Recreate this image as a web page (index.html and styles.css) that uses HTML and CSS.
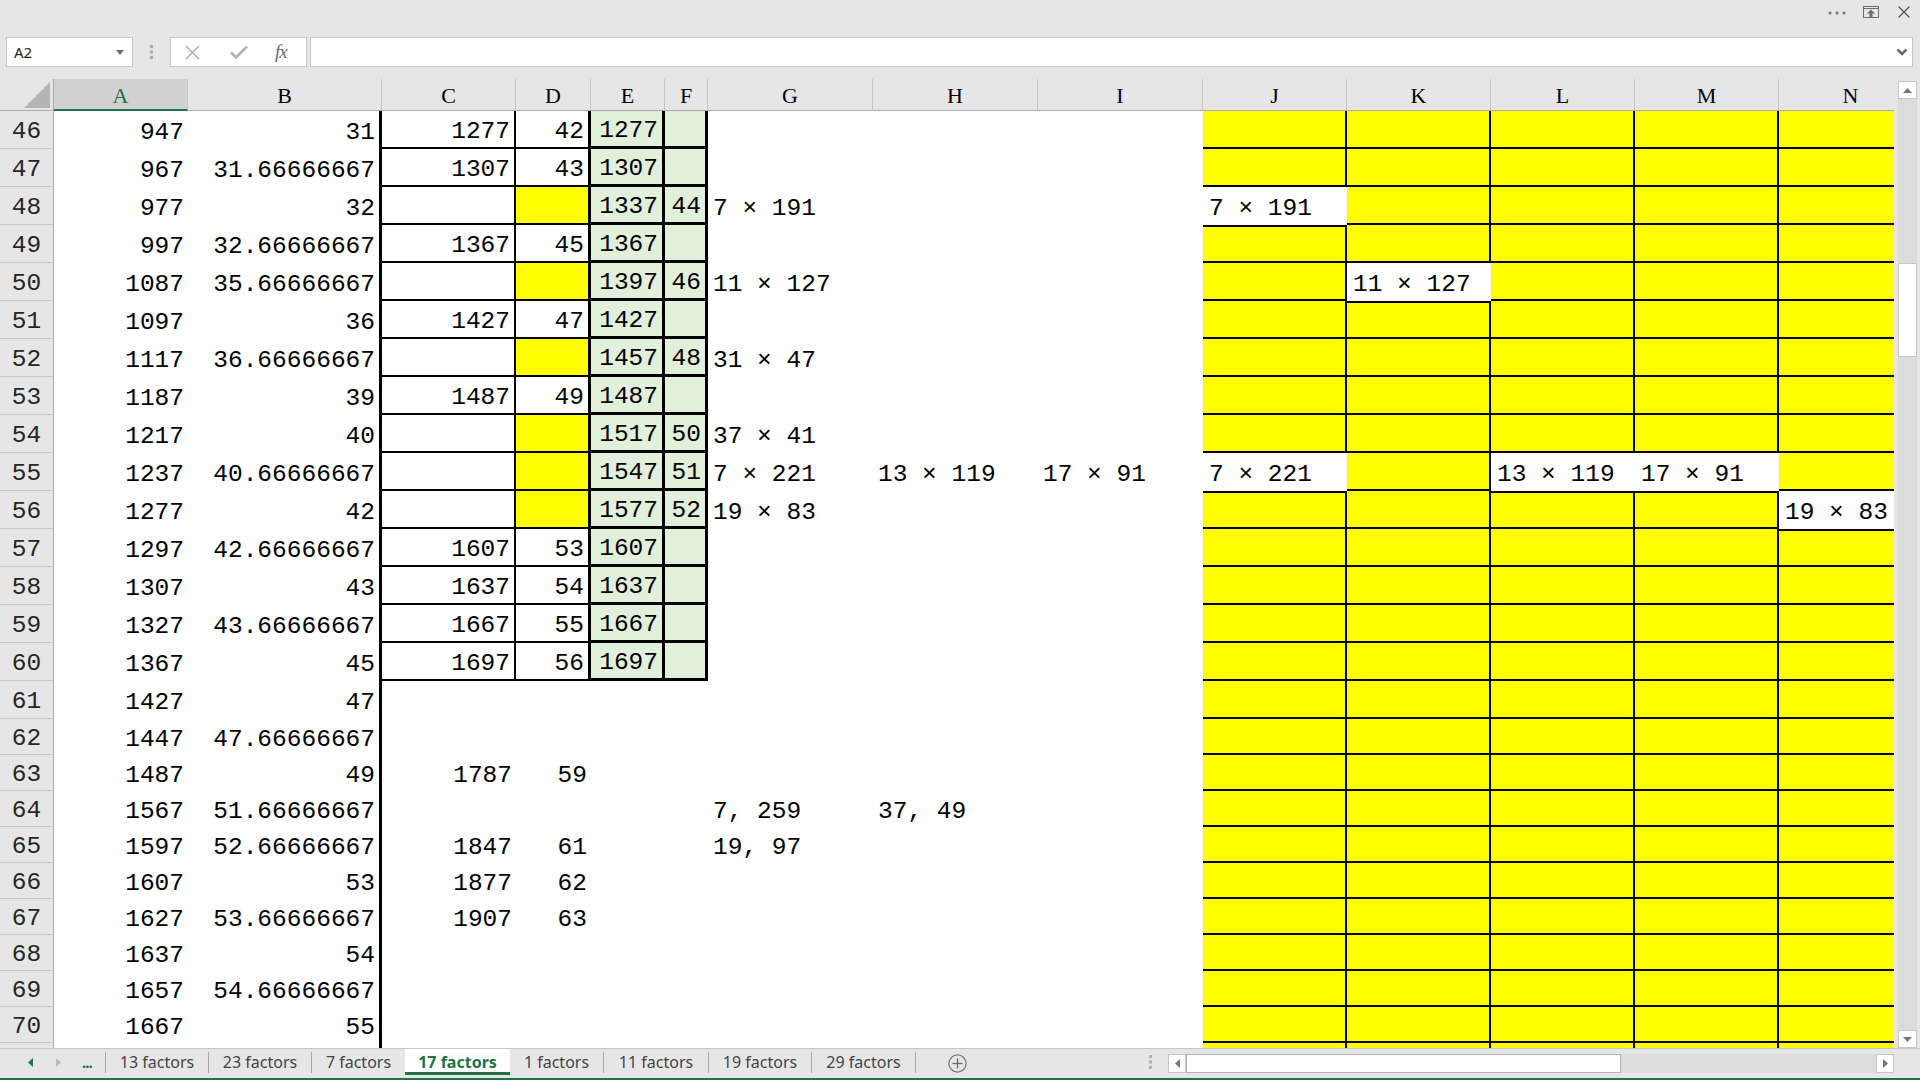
FILE: index.html
```html
<!DOCTYPE html>
<html>
<head>
<meta charset="utf-8">
<title>17 factors</title>
<link rel="stylesheet" href="styles.css">
</head>
<body>
<div class="app">
  <div class="top">
    <svg class="more" width="18" height="4" viewBox="0 0 18 4"><circle cx="2" cy="2" r="1.6" fill="#7a7a7a"/><circle cx="9" cy="2" r="1.6" fill="#7a7a7a"/><circle cx="16" cy="2" r="1.6" fill="#7a7a7a"/></svg>
    <svg class="restore" width="16" height="12" viewBox="0 0 16 12"><rect x="0.5" y="0.5" width="15" height="11" fill="none" stroke="#6d6d6d"/><line x1="1" y1="2.5" x2="15" y2="2.5" stroke="#6d6d6d"/><polygon points="8,3.5 4,7.5 6.5,7.5 6.5,11 9.5,11 9.5,7.5 12,7.5" fill="#6d6d6d"/></svg>
    <svg class="close" width="12" height="12" viewBox="0 0 12 12"><line x1="0.5" y1="0.5" x2="11.5" y2="11.5" stroke="#555" stroke-width="1.2"/><line x1="11.5" y1="0.5" x2="0.5" y2="11.5" stroke="#555" stroke-width="1.2"/></svg>
  </div>
  <div class="fbar">
    <div class="namebox"><span>A2</span><svg width="8" height="5" viewBox="0 0 8 5"><polygon points="0,0 8,0 4,5" fill="#6b6b6b"/></svg></div>
    <div class="grip"><svg width="4" height="14" viewBox="0 0 4 14"><rect x="0" y="0" width="3" height="3" fill="#a8a8a8"/><rect x="0" y="5.5" width="3" height="3" fill="#a8a8a8"/><rect x="0" y="11" width="3" height="3" fill="#a8a8a8"/></svg></div>
    <div class="fbtns">
      <svg width="15" height="15" viewBox="0 0 15 15"><line x1="1" y1="1" x2="14" y2="14" stroke="#b3b3b3" stroke-width="1.6"/><line x1="14" y1="1" x2="1" y2="14" stroke="#b3b3b3" stroke-width="1.6"/></svg>
      <svg class="chk" width="18" height="14" viewBox="0 0 18 14"><polyline points="1,7.5 6,12.5 17,1.5" fill="none" stroke="#b3b3b3" stroke-width="2.6"/></svg>
      <span class="fx">fx</span>
    </div>
    <div class="finput"><svg width="12" height="8" viewBox="0 0 12 8"><polyline points="1.5,1.5 6,6 10.5,1.5" fill="none" stroke="#6b6b6b" stroke-width="2.6"/></svg></div>
  </div>
  <div class="sheet">
    <div class="grid">
      <div class="hdr">
        <span class="corner"><svg width="26" height="26" viewBox="0 0 26 26"><polygon points="26,0 26,26 0,26" fill="#b4b4b4"/></svg></span>
        <span class="sel">A</span><span>B</span><span>C</span><span>D</span><span>E</span><span>F</span><span>G</span><span>H</span><span>I</span><span>J</span><span>K</span><span>L</span><span>M</span><span>N</span>
      </div>
      <div class="row"><span class="h">46</span><span>947</span><span class="B">31</span><span class="C">1277</span><span class="D">42</span><span class="E">1277</span><span class="E"></span><span></span><span></span><span></span><span class="y"></span><span class="y"></span><span class="y"></span><span class="y"></span><span class="y"></span></div>
      <div class="row"><span class="h">47</span><span>967</span><span class="B">31.66666667</span><span class="C">1307</span><span class="D">43</span><span class="E">1307</span><span class="E"></span><span></span><span></span><span></span><span class="y"></span><span class="y"></span><span class="y"></span><span class="y"></span><span class="y"></span></div>
      <div class="row"><span class="h">48</span><span>977</span><span class="B">32</span><span class="C"></span><span class="D Y"></span><span class="E">1337</span><span class="E">44</span><span class="L">7 × 191</span><span></span><span></span><span class="w">7 × 191</span><span class="y"></span><span class="y"></span><span class="y"></span><span class="y"></span></div>
      <div class="row"><span class="h">49</span><span>997</span><span class="B">32.66666667</span><span class="C">1367</span><span class="D">45</span><span class="E">1367</span><span class="E"></span><span></span><span></span><span></span><span class="y t"></span><span class="y"></span><span class="y"></span><span class="y"></span><span class="y"></span></div>
      <div class="row"><span class="h">50</span><span>1087</span><span class="B">35.66666667</span><span class="C"></span><span class="D Y"></span><span class="E">1397</span><span class="E">46</span><span class="L">11 × 127</span><span></span><span></span><span class="y"></span><span class="w">11 × 127</span><span class="y"></span><span class="y"></span><span class="y"></span></div>
      <div class="row"><span class="h">51</span><span>1097</span><span class="B">36</span><span class="C">1427</span><span class="D">47</span><span class="E">1427</span><span class="E"></span><span></span><span></span><span></span><span class="y"></span><span class="y t"></span><span class="y"></span><span class="y"></span><span class="y"></span></div>
      <div class="row"><span class="h">52</span><span>1117</span><span class="B">36.66666667</span><span class="C"></span><span class="D Y"></span><span class="E">1457</span><span class="E">48</span><span class="L">31 × 47</span><span></span><span></span><span class="y"></span><span class="y"></span><span class="y"></span><span class="y"></span><span class="y"></span></div>
      <div class="row"><span class="h">53</span><span>1187</span><span class="B">39</span><span class="C">1487</span><span class="D">49</span><span class="E">1487</span><span class="E"></span><span></span><span></span><span></span><span class="y"></span><span class="y"></span><span class="y"></span><span class="y"></span><span class="y"></span></div>
      <div class="row"><span class="h">54</span><span>1217</span><span class="B">40</span><span class="C"></span><span class="D Y"></span><span class="E">1517</span><span class="E">50</span><span class="L">37 × 41</span><span></span><span></span><span class="y"></span><span class="y"></span><span class="y"></span><span class="y"></span><span class="y"></span></div>
      <div class="row"><span class="h">55</span><span>1237</span><span class="B">40.66666667</span><span class="C"></span><span class="D Y"></span><span class="E">1547</span><span class="E">51</span><span class="L">7 × 221</span><span class="L">13 × 119</span><span class="L">17 × 91</span><span class="w">7 × 221</span><span class="y"></span><span class="w">13 × 119</span><span class="w">17 × 91</span><span class="y"></span></div>
      <div class="row"><span class="h">56</span><span>1277</span><span class="B">42</span><span class="C"></span><span class="D Y"></span><span class="E">1577</span><span class="E">52</span><span class="L">19 × 83</span><span></span><span></span><span class="y t"></span><span class="y"></span><span class="y t"></span><span class="y t"></span><span class="w">19 × 83</span></div>
      <div class="row"><span class="h">57</span><span>1297</span><span class="B">42.66666667</span><span class="C">1607</span><span class="D">53</span><span class="E">1607</span><span class="E"></span><span></span><span></span><span></span><span class="y"></span><span class="y"></span><span class="y"></span><span class="y"></span><span class="y t"></span></div>
      <div class="row"><span class="h">58</span><span>1307</span><span class="B">43</span><span class="C">1637</span><span class="D">54</span><span class="E">1637</span><span class="E"></span><span></span><span></span><span></span><span class="y"></span><span class="y"></span><span class="y"></span><span class="y"></span><span class="y"></span></div>
      <div class="row"><span class="h">59</span><span>1327</span><span class="B">43.66666667</span><span class="C">1667</span><span class="D">55</span><span class="E">1667</span><span class="E"></span><span></span><span></span><span></span><span class="y"></span><span class="y"></span><span class="y"></span><span class="y"></span><span class="y"></span></div>
      <div class="row"><span class="h">60</span><span>1367</span><span class="B">45</span><span class="C">1697</span><span class="D">56</span><span class="E">1697</span><span class="E"></span><span></span><span></span><span></span><span class="y"></span><span class="y"></span><span class="y"></span><span class="y"></span><span class="y"></span></div>
      <div class="row"><span class="h">61</span><span>1427</span><span class="B">47</span><span></span><span></span><span></span><span></span><span></span><span></span><span></span><span class="y"></span><span class="y"></span><span class="y"></span><span class="y"></span><span class="y"></span></div>
      <div class="row s"><span class="h">62</span><span>1447</span><span class="B">47.66666667</span><span></span><span></span><span></span><span></span><span></span><span></span><span></span><span class="y"></span><span class="y"></span><span class="y"></span><span class="y"></span><span class="y"></span></div>
      <div class="row s"><span class="h">63</span><span>1487</span><span class="B">49</span><span>1787</span><span>59</span><span></span><span></span><span></span><span></span><span></span><span class="y"></span><span class="y"></span><span class="y"></span><span class="y"></span><span class="y"></span></div>
      <div class="row s"><span class="h">64</span><span>1567</span><span class="B">51.66666667</span><span></span><span></span><span></span><span></span><span class="L">7, 259</span><span class="L">37, 49</span><span></span><span class="y"></span><span class="y"></span><span class="y"></span><span class="y"></span><span class="y"></span></div>
      <div class="row s"><span class="h">65</span><span>1597</span><span class="B">52.66666667</span><span>1847</span><span>61</span><span></span><span></span><span class="L">19, 97</span><span></span><span></span><span class="y"></span><span class="y"></span><span class="y"></span><span class="y"></span><span class="y"></span></div>
      <div class="row s"><span class="h">66</span><span>1607</span><span class="B">53</span><span>1877</span><span>62</span><span></span><span></span><span></span><span></span><span></span><span class="y"></span><span class="y"></span><span class="y"></span><span class="y"></span><span class="y"></span></div>
      <div class="row s"><span class="h">67</span><span>1627</span><span class="B">53.66666667</span><span>1907</span><span>63</span><span></span><span></span><span></span><span></span><span></span><span class="y"></span><span class="y"></span><span class="y"></span><span class="y"></span><span class="y"></span></div>
      <div class="row s"><span class="h">68</span><span>1637</span><span class="B">54</span><span></span><span></span><span></span><span></span><span></span><span></span><span></span><span class="y"></span><span class="y"></span><span class="y"></span><span class="y"></span><span class="y"></span></div>
      <div class="row s"><span class="h">69</span><span>1657</span><span class="B">54.66666667</span><span></span><span></span><span></span><span></span><span></span><span></span><span></span><span class="y"></span><span class="y"></span><span class="y"></span><span class="y"></span><span class="y"></span></div>
      <div class="row s"><span class="h">70</span><span>1667</span><span class="B">55</span><span></span><span></span><span></span><span></span><span></span><span></span><span></span><span class="y"></span><span class="y"></span><span class="y"></span><span class="y"></span><span class="y"></span></div>
      <div class="row s"><span class="h"></span><span></span><span class="B"></span><span></span><span></span><span></span><span></span><span></span><span></span><span></span><span class="y"></span><span class="y"></span><span class="y"></span><span class="y"></span><span class="y"></span></div>
    </div>
    <div class="vscroll">
      <div class="sbtn"><svg width="9" height="5" viewBox="0 0 9 5"><polygon points="4.5,0 9,5 0,5" fill="#777"/></svg></div>
      <div class="vtrack"><div class="vthumb"></div></div>
      <div class="sbtn"><svg width="9" height="5" viewBox="0 0 9 5"><polygon points="0,0 9,0 4.5,5" fill="#777"/></svg></div>
    </div>
  </div>
  <div class="tabbar">
    <div class="tabarea">
      <div class="nav">
        <svg class="prev" width="5" height="9" viewBox="0 0 5 9"><polygon points="5,0 5,9 0,4.5" fill="#217346"/></svg>
        <svg class="next" width="5" height="9" viewBox="0 0 5 9"><polygon points="0,0 5,4.5 0,9" fill="#b9b9b9"/></svg>
        <span class="ell">...</span>
      </div>
      <i class="sep"></i>
      <span class="tab w102">13 factors</span><i class="sep"></i>
      <span class="tab w102">23 factors</span><i class="sep"></i>
      <span class="tab w93">7 factors</span>
      <span class="tab active">17 factors</span>
      <span class="tab w93">1 factors</span><i class="sep"></i>
      <span class="tab w104">11 factors</span><i class="sep"></i>
      <span class="tab w102">19 factors</span><i class="sep"></i>
      <span class="tab w103">29 factors</span><i class="sep"></i>
      <svg class="plus" width="19" height="19" viewBox="0 0 19 19"><circle cx="9.5" cy="9.5" r="8.6" fill="none" stroke="#7b7b7b" stroke-width="1.3"/><line x1="9.5" y1="4.5" x2="9.5" y2="14.5" stroke="#6b6b6b" stroke-width="1.3"/><line x1="4.5" y1="9.5" x2="14.5" y2="9.5" stroke="#6b6b6b" stroke-width="1.3"/></svg>
    </div>
    <div class="split"><svg width="3" height="14" viewBox="0 0 3 14"><rect x="0" y="0" width="3" height="3" fill="#b0b0b0"/><rect x="0" y="5.5" width="3" height="3" fill="#b0b0b0"/><rect x="0" y="11" width="3" height="3" fill="#b0b0b0"/></svg></div>
    <div class="hscroll">
      <div class="hbtn"><svg width="5" height="9" viewBox="0 0 5 9"><polygon points="5,0 5,9 0,4.5" fill="#777"/></svg></div>
      <div class="hthumb"></div>
      <div class="htrack"></div>
      <div class="hbtn"><svg width="5" height="9" viewBox="0 0 5 9"><polygon points="0,0 5,4.5 0,9" fill="#777"/></svg></div>
    </div>
  </div>
</div>
</body>
</html>
```

FILE: styles.css
```css
* { box-sizing: border-box; }
html, body { margin: 0; padding: 0; }
body {
  width: 1920px;
  height: 1080px;
  overflow: hidden;
  background: #e6e6e6;
  font-family: "Liberation Mono", "DejaVu Sans Mono", monospace;
}
.app {
  width: 1920px;
  height: 1080px;
  display: flex;
  flex-direction: column;
  background: #e6e6e6;
}

/* window controls */
.top {
  height: 37px;
  display: flex;
  justify-content: flex-end;
  align-items: flex-start;
  padding: 6px 10px 0 0;
}
.top .more { margin-top: 5px; margin-right: 17px; }
.top .restore { margin-right: 19px; }

/* formula bar */
.fbar {
  height: 30px;
  display: flex;
  margin-bottom: 12px;
  padding: 0 7px 0 6px;
}
.namebox {
  width: 127px;
  background: #fff;
  border: 1px solid #c6c6c6;
  display: flex;
  align-items: center;
  justify-content: space-between;
  padding: 0 8px 0 7px;
  font-family: "Noto Sans", "Open Sans", sans-serif;
  font-size: 15px;
  color: #222;
}
.grip {
  width: 37px;
  display: flex;
  align-items: center;
  justify-content: center;
}
.fbtns {
  width: 137px;
  background: #fff;
  border: 1px solid #c6c6c6;
  display: flex;
  align-items: center;
  padding-left: 14px;
}
.fbtns .chk { margin-left: 30px; }
.fx {
  margin-left: 27px;
  font-family: "Liberation Serif", serif;
  font-style: italic;
  font-size: 19px;
  color: #6b6b6b;
  letter-spacing: -1px;
}
.finput {
  flex: 1;
  margin-left: 3px;
  background: #fff;
  border: 1px solid #c6c6c6;
  display: flex;
  align-items: center;
  justify-content: flex-end;
  padding-right: 4px;
}

/* sheet */
.sheet {
  height: 969px;
  display: flex;
}
.grid {
  width: 1894px;
  height: 969px;
  overflow: hidden;
}
.hdr, .row {
  display: grid;
  grid-template-columns: 54px 134px 194px 134px 75px 74px 43px 165px 165px 165px 144px 144px 144px 144px 144px;
}
.hdr {
  height: 32px;
  background: #e6e6e6;
}
.hdr > span {
  display: flex;
  align-items: center;
  justify-content: center;
  border-right: 1px solid #c6c6c6;
  border-bottom: 1px solid #ababab;
  font-family: "Liberation Serif", serif;
  font-size: 22px;
  color: #000;
  padding-top: 3px;
}
.hdr > .corner {
  align-items: flex-end;
  justify-content: flex-end;
  padding: 0 3px 2px 0;
  border-right: 1px solid #ababab;
}
.hdr > .sel {
  background: #d2d2d2;
  color: #217346;
  border-bottom: 2px solid #217346;
}
.row {
  height: 38px;
  background: #fff;
}
.row.s { height: 36px; }
.row > span {
  display: flex;
  align-items: center;
  justify-content: flex-end;
  padding: 4px 4px 0 4px;
  white-space: nowrap;
  font-size: 24.5px;
  color: #000;
}
.row > .h {
  background: #e6e6e6;
  justify-content: center;
  padding: 4px 0 0 0;
  border-right: 1px solid #ababab;
  border-bottom: 1px solid #c6c6c6;
  color: #262626;
}
.row > .B { border-right: 3px solid #000; }
.row > .C {
  border-right: 2px solid #000;
  border-bottom: 2px solid #000;
}
.row > .D {
  border-right: 3px solid #000;
  border-bottom: 2px solid #000;
}
.row > .Y { background: #ffff00; }
.row > .E {
  background: #e2efda;
  border-right: 3px solid #000;
  border-bottom: 3px solid #000;
}
.row > .L {
  justify-content: flex-start;
  padding-left: 5px;
}
.row > .y {
  background: #ffff00;
  border-right: 2px solid #000;
  border-bottom: 2px solid #000;
}
.row > .y.t { border-top: 2px solid #000; }
.row > .w {
  background: #fff;
  justify-content: flex-start;
  padding-left: 6px;
}

/* vertical scrollbar */
.vscroll {
  width: 26px;
  height: 969px;
  display: flex;
  flex-direction: column;
  align-items: center;
  padding-top: 2px;
}
.sbtn {
  width: 19px;
  height: 18px;
  flex: none;
  background: #fff;
  border: 1px solid #c6c6c6;
  display: flex;
  align-items: center;
  justify-content: center;
}
.vtrack {
  flex: 1;
  width: 19px;
  background: #dcdcdc;
  padding-top: 164px;
}
.vthumb {
  width: 19px;
  height: 94px;
  background: #fff;
  border: 1px solid #c6c6c6;
}

/* sheet tabs */
.tabbar {
  height: 32px;
  display: flex;
  align-items: flex-start;
  border-top: 1px solid #c6c6c6;
  border-bottom: 2px solid #217346;
  font-family: "Noto Sans", "Open Sans", sans-serif;
  font-size: 16px;
  color: #444;
}
.tabarea {
  width: 1140px;
  height: 26px;
  display: flex;
  align-items: center;
}
.nav {
  width: 105px;
  height: 26px;
  display: flex;
  align-items: center;
  padding-left: 28px;
}
.nav .next { margin-left: 23px; }
.nav .ell {
  margin-left: 21px;
  color: #217346;
  font-size: 15px;
  font-weight: bold;
  letter-spacing: -1px;
}
.sep {
  width: 1px;
  height: 21px;
  background: #a6a6a6;
  flex: none;
}
.tab {
  height: 26px;
  display: flex;
  align-items: center;
  justify-content: center;
  white-space: nowrap;
  flex: none;
}
.w93 { width: 93px; }
.w102 { width: 102px; }
.w103 { width: 103px; }
.w104 { width: 104px; }
.tab.active {
  width: 105px;
  background: #fff;
  color: #217346;
  font-weight: bold;
  border-bottom: 3px solid #217346;
  padding-top: 2px;
}
.plus { margin-left: 32px; margin-top: 2px; }
.split {
  width: 20px;
  height: 26px;
  display: flex;
  align-items: center;
  justify-content: center;
}
.hscroll {
  width: 726px;
  height: 19px;
  margin-left: 8px;
  margin-top: 5px;
  display: flex;
}
.hbtn {
  width: 18px;
  height: 19px;
  background: #fff;
  border: 1px solid #c6c6c6;
  display: flex;
  align-items: center;
  justify-content: center;
  flex: none;
}
.hthumb {
  width: 435px;
  height: 19px;
  background: #fff;
  border: 1px solid #b4b4b4;
  flex: none;
}
.htrack {
  flex: 1;
  height: 19px;
  background: #dcdcdc;
}
```
